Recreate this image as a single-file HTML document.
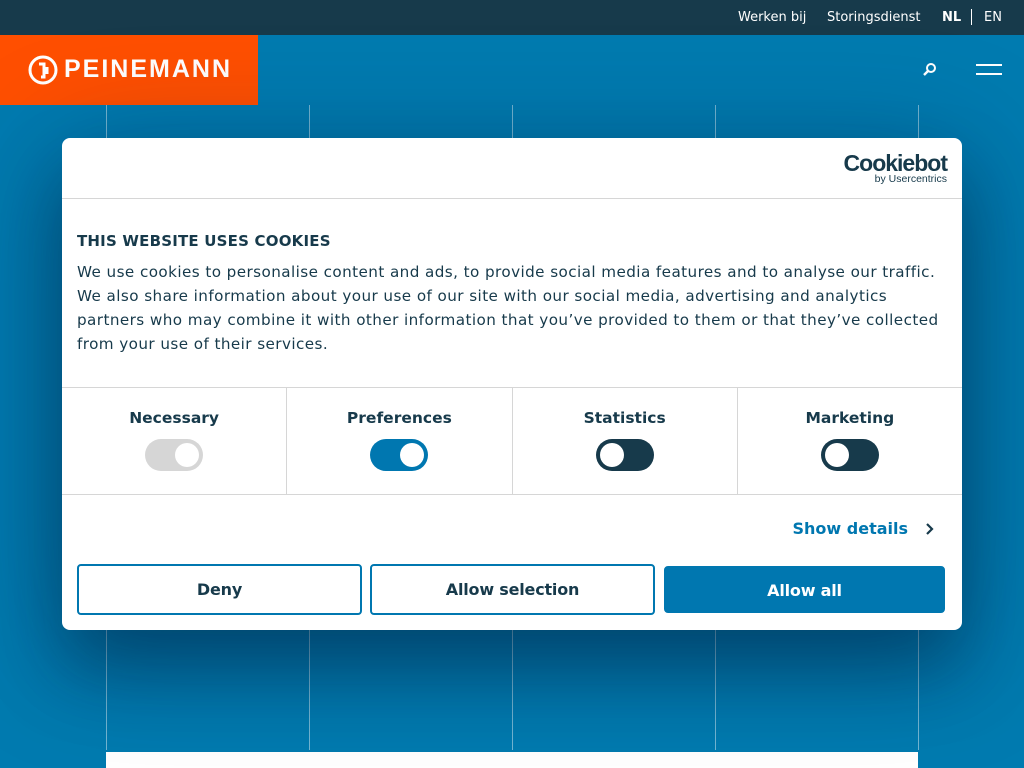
<!DOCTYPE html>
<html><head><meta charset="utf-8"><style>
*{margin:0;padding:0;box-sizing:border-box}
body{width:1024px;height:768px;overflow:hidden;background:#007bb0;font-family:"DejaVu Sans","Liberation Sans",sans-serif;position:relative;color:#141e23}
.top{position:absolute;left:0;top:0;width:1024px;height:35px;background:#173a4b;color:#fff;font-size:13px}
.top span{position:absolute;top:10px}
.logo{position:absolute;left:0;top:35px;width:258px;height:70px;background:#ff4f00;color:#fff}
.logo .t{position:absolute;left:64px;top:20px;font:bold 25px "Liberation Sans",sans-serif;letter-spacing:2px}
.vl{position:absolute;top:105px;width:1px;height:645px;background:rgba(255,255,255,.45)}
.wb{position:absolute;left:106px;top:752px;width:812px;height:16px;background:#fff}
.modal{position:absolute;left:62px;top:138px;width:900px;height:492px;background:#fff;border-radius:8px;box-shadow:0 40px 70px rgba(0,20,50,.35),0 20px 120px rgba(0,30,60,.35);color:#173a4b}
.hd{height:61px;border-bottom:1px solid #d6d6d6;position:relative}
h2{position:absolute;left:15px;top:94px;font-size:15px;font-weight:bold;letter-spacing:.2px}
.bt{position:absolute;left:15px;top:122px;width:866px;font-size:15.2px;line-height:24px;letter-spacing:.42px}
.cats{position:absolute;left:0;top:249px;width:900px;height:108px;border-top:1px solid #d6d6d6;border-bottom:1px solid #d6d6d6;display:flex}
.c{flex:1;border-right:1px solid #d6d6d6;text-align:center;position:relative}
.c:last-child{border-right:none}
.c b{display:block;margin-top:21px;font-size:15.5px}
.tg{position:absolute;left:50%;margin-left:-29px;top:51px;width:58px;height:32px;border-radius:16px}
.tg i{position:absolute;top:4px;width:24px;height:24px;border-radius:50%;background:#fff}
.sd{position:absolute;right:54px;top:381px;color:#0077b0;font-weight:bold;font-size:16px}
.btn{position:absolute;top:426px;height:51px;border:2px solid #0077b0;border-radius:4px;text-align:center;line-height:47px;font-weight:bold;font-size:16px;letter-spacing:-.2px}
</style></head><body>
<div class="top"><span style="left:738px">Werken bij</span><span style="left:827px">Storingsdienst</span><span style="left:942px;font-weight:bold">NL</span><span style="left:971px;top:9px;width:1px;height:16px;background:#fff"></span><span style="left:984px">EN</span></div>
<div class="logo"><svg style="position:absolute;left:28px;top:20px" width="30" height="30" viewBox="0 0 30 30"><circle cx="15" cy="15" r="13" fill="none" stroke="#fff" stroke-width="3"/><path d="M11 9h5v13h-3M19 12v7" fill="none" stroke="#fff" stroke-width="3"/></svg><span class="t">PEINEMANN</span></div>
<svg style="position:absolute;left:922px;top:62px" width="16" height="16" viewBox="0 0 16 16"><circle cx="9" cy="6" r="4" fill="none" stroke="#fff" stroke-width="2"/><path d="M6 9l-4 4" stroke="#fff" stroke-width="2.4"/></svg>
<div style="position:absolute;left:976px;top:64px;width:26px;height:2px;background:#fff"></div>
<div style="position:absolute;left:976px;top:73px;width:26px;height:2px;background:#fff"></div>
<div class="vl" style="left:106px"></div><div class="vl" style="left:309px"></div><div class="vl" style="left:512px"></div><div class="vl" style="left:715px"></div><div class="vl" style="left:918px"></div>
<div class="wb"></div>
<div class="modal">
<div class="hd"><div style="position:absolute;right:15px;top:12px;text-align:right;color:#173a4b"><div style="font:bold 23px 'Liberation Sans',sans-serif;letter-spacing:-1px;line-height:26px">Cookiebot</div><div style="font:10.5px 'Liberation Sans',sans-serif;margin-top:-3px">by Usercentrics</div></div></div>
<h2>THIS WEBSITE USES COOKIES</h2>
<div class="bt">We use cookies to personalise content and ads, to provide social media features and to analyse our traffic. We also share information about your use of our site with our social media, advertising and analytics partners who may combine it with other information that you’ve provided to them or that they’ve collected from your use of their services.</div>
<div class="cats">
<div class="c"><b>Necessary</b><div class="tg" style="background:#d6d6d6"><i style="right:4px"></i></div></div>
<div class="c"><b>Preferences</b><div class="tg" style="background:#0077b0"><i style="right:4px"></i></div></div>
<div class="c"><b>Statistics</b><div class="tg" style="background:#173a4b"><i style="left:4px"></i></div></div>
<div class="c"><b>Marketing</b><div class="tg" style="background:#173a4b"><i style="left:4px"></i></div></div>
</div>
<div class="sd">Show details</div>
<svg style="position:absolute;left:862px;top:384px" width="10" height="14" viewBox="0 0 10 14"><path d="M3 2l5 5-5 5" fill="none" stroke="#173a4b" stroke-width="2.2"/></svg>
<div class="btn" style="left:15px;width:285px">Deny</div>
<div class="btn" style="left:308px;width:285px">Allow selection</div>
<div class="btn" style="left:602px;width:281px;top:428px;height:47px;line-height:45px;background:#0077b0;color:#fff;border-color:#0077b0">Allow all</div>
</div>
</body></html>
